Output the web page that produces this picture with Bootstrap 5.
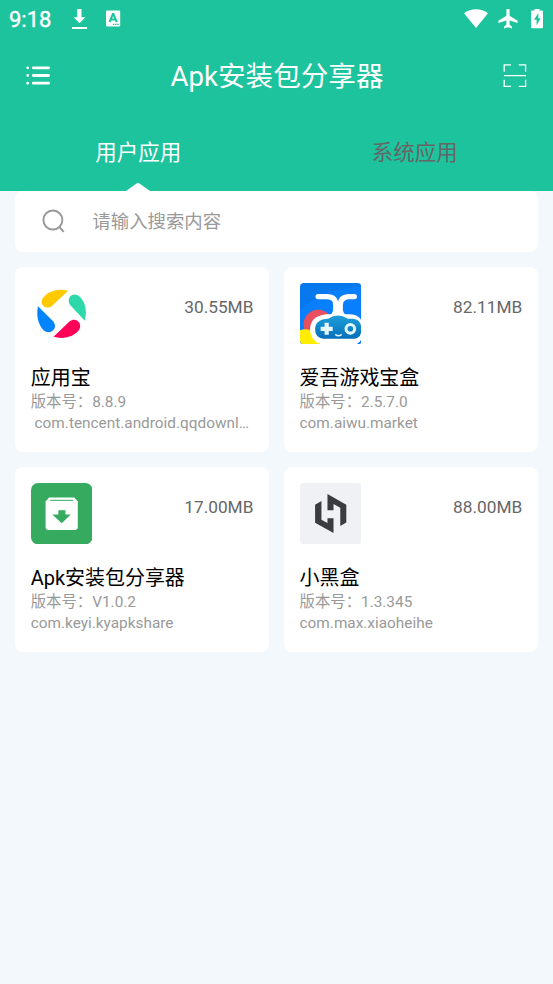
<!DOCTYPE html>
<html lang="zh-CN">
<head>
<meta charset="utf-8">
<meta name="viewport" content="width=device-width, initial-scale=1">
<title>Apk安装包分享器</title>
<link href="https://cdn.jsdelivr.net/npm/bootstrap@5.3.0/dist/css/bootstrap.min.css" rel="stylesheet">
<style>
body{background:#f2f8fb;font-family:Roboto,"Noto Sans CJK SC",sans-serif;min-height:984px;overflow-x:hidden}
svg{display:block;flex:none}
.app-head{background:#1cc39d;height:190.6px}
.status{height:38px;padding:0 10px 0 9px}
.clock{font-size:22px;font-weight:400;-webkit-text-stroke:.4px #fff;line-height:38px;padding-top:2px;width:62px}
.plane{margin-left:10px}
.battery{margin-left:13px}
.toolbar{height:76px;padding:0 26px}
.toolbar h1{font-size:27.6px;font-weight:400;line-height:76px;padding-top:2px}
.tab{height:76.6px;font-size:21.5px;line-height:78px;color:#666}
.tab.on{color:#fff}
.notch{bottom:0;left:50%;transform:translateX(-50%)}
.page{padding:0 15.36px}
.search{height:61.4px;border-radius:8px;padding-left:27px}
.search span{font-size:18.4px;color:#999;margin-left:27px;padding-top:1px}
.apps{display:grid;grid-template-columns:repeat(2,minmax(0,1fr));gap:15.36px;margin-top:15.36px}
.app{height:184.6px;border-radius:8px;padding:15.4px}
.app svg{width:61.4px;height:61.4px}
.size{font-size:17.25px;line-height:20px;color:#666;margin-top:14px}
.name{font-size:19.97px;line-height:27px;color:#000;margin-top:20.7px}
.info{font-size:15.36px;line-height:21.2px;color:#999}
</style>
</head>
<body>
<header class="app-head text-white">
  <div class="status d-flex align-items-center">
    <span class="clock">9:18</span>
    <svg width="17" height="22" viewBox="0 0 17 22" fill="#fff"><path d="M6.200 1h4.300v8.200h3.900l-5.900 6-5.900-6h3.600zM1 19h15v2H1z"/></svg>
    <svg class="ms-3" width="18" height="20" viewBox="0 0 18 20"><rect x="2" y="1.500" width="14.200" height="16" rx="1.200" fill="#fff"/><path d="m5.600 13 3.300-8h.500l3.300 8M6.800 10.600h4.600" fill="none" stroke="#1cc39d" stroke-width="2"/><path d="M9 15.300h1.400m.7 0h1.400m.7 0h1.400" stroke="#1cc39d" stroke-width="1.200"/></svg>
    <svg class="wifi ms-auto" width="24" height="20" viewBox="0 0 24 20" fill="#fff"><path d="M0 4.200C7-1.200 17-1.200 24 4.200L12 19z"/></svg>
    <svg class="plane" width="20" height="20" viewBox="0 0 20 20" fill="#fff"><path d="M8.400 1.100a1.600 1.600 0 0 1 3.200 0v5.700l8 5v2.100l-8-2.500v4.400l2.300 1.700v1.900L10 18.300l-3.900 1.100v-1.900l2.300-1.700v-4.400l-8 2.500v-2.100l8-5z"/></svg>
    <svg class="battery" width="12" height="20" viewBox="0 0 12 20"><path d="M1.200 1.500H3.500V-.300h5v1.800h2.300Q12 1.500 12 2.700v15.300q0 1.300-1.200 1.300H1.200Q0 19.300 0 18V2.700Q0 1.500 1.200 1.500z" fill="#fff"/><path d="M7.300 4 3 10.800h2.600v5.700l4-7.300H7.300z" fill="#1cc39d"/></svg>
  </div>
  <div class="toolbar d-flex align-items-center justify-content-between">
    <svg width="25" height="20" viewBox="0 0 25 20" stroke="#fff" stroke-linecap="round"><path d="M7.300 1.800h15.300M7.300 9.500h15.300M7.300 17.200h15.300" stroke-width="2.800"/><path d="M1.700 1.800h0M1.700 9.500h0M1.700 17.200h0" stroke-width="2.800"/></svg>
    <h1 class="m-0">Apk安装包分享器</h1>
    <svg width="24" height="24" viewBox="0 0 24 24" fill="none" stroke="#fff" stroke-width="1.300"><path d="M1.200 7.700V.900H8M15.800.900h6.800v6.800M1.200 15.700v6.700H8M15.800 22.400h6.800v-6.700M1 11.600h22"/></svg>
  </div>
  <nav class="row g-0 text-center">
    <div class="col tab on position-relative">用户应用
      <svg class="notch position-absolute" width="24" height="8" viewBox="0 0 24 8"><path d="M0 8 10.500.500Q12-.400 13.500.500L24 8z" fill="#fff"/></svg>
    </div>
    <div class="col tab">系统应用</div>
  </nav>
</header>
<main class="page">
  <div class="search bg-white d-flex align-items-center">
    <svg width="23" height="24" viewBox="0 0 23 24" fill="none" stroke="#999" stroke-width="1.900"><circle cx="10.900" cy="11" r="9.500"/><path d="m17.400 18 4.300 4.900"/></svg>
    <span>请输入搜索内容</span>
  </div>
  <section class="apps">
    <article class="app bg-white">
      <div class="d-flex justify-content-between">
        <svg viewBox="0 0 61 61"><g transform="translate(2.400 -.500)"><path d="M34.500 8.300C23 5 12 10 8.700 17c-2.300 5 3.300 10.700 9.400 6.500z" fill="#ffca00"/><path d="M51 38C54.300 27 50 15.500 43.500 12.500c-5-2.300-11.500 3.500-7 9.800z" fill="#2ed8aa"/><path d="M20 54c11 3.300 23-1.500 26-8.300 2.300-5.500-4-11.700-10.200-7z" fill="#ff0358"/><path d="M4.500 23.500C2 35 6.500 46 12.500 49c5.800 2.300 12-4 7.300-10.200z" fill="#0085ff"/></g></svg>
        <span class="size">30.55MB</span>
      </div>
      <div class="name">应用宝</div>
      <div class="info">版本号：8.8.9</div>
      <div class="info text-nowrap">&nbsp;com.tencent.android.qqdownl…</div>
    </article>
    <article class="app bg-white">
      <div class="d-flex justify-content-between">
        <svg viewBox="0 0 61 61">
          <defs><clipPath id="tile"><rect width="61" height="61" rx="4"/></clipPath><linearGradient id="pad" x2="0" y2="1"><stop stop-color="#1e9fda"/><stop offset="1" stop-color="#056fb8"/></linearGradient></defs>
          <g clip-path="url(#tile)"><path fill="#0878ef" d="M0 0h61v61H0z"/><path fill="#087fff" d="M0 28C18 10 40 4 61 4v57H0z"/><circle cx="18" cy="41" r="14.500" fill="#e9505f"/><circle cx="5" cy="60" r="14" fill="#ffed00"/>
          <path d="M26 31H50Q63 32 63 45.500 63 62 50 62H26Q10 60 10 46 10 33 26 31z" fill="#fff"/>
          <path d="M18 13.500h8.500c7 0 9 3.500 9 8.500v4q0 6-6 9M54 13.500h-4.500c-7 0-9.500 3.500-9.500 8.500v4q0 6 6 9" fill="none" stroke="#fff" stroke-width="5.200" stroke-linecap="round"/>
          <path d="M35 24h6v10h-6z" fill="#fff"/>
          <path d="M28 35.500q9.500-6.500 19.500 0h5.500q8 1 8 10.500t-8 9.500H26q-11 0-11-9.500 0-10 13-10.500z" fill="url(#pad)"/>
          <path d="M26.500 39.500v12M20.500 45.500h12" stroke="#e4f7ff" stroke-width="4.200"/><circle cx="50" cy="45.500" r="4.300" fill="none" stroke="#e4f7ff" stroke-width="3"/><path d="M35 51q3.200 2.800 6.400 0" stroke="#e4f7ff" stroke-width="1.500" fill="none"/></g>
        </svg>
        <span class="size">82.11MB</span>
      </div>
      <div class="name">爱吾游戏宝盒</div>
      <div class="info">版本号：2.5.7.0</div>
      <div class="info text-nowrap">com.aiwu.market</div>
    </article>
    <article class="app bg-white">
      <div class="d-flex justify-content-between">
        <svg viewBox="0 0 61 61"><rect width="61" height="61" rx="7" fill="#36ab60"/><path d="M18 14.500h25l3.500 4V43.500q0 3.200-3.200 3.200H17.700q-3.200 0-3.200-3.200V18.500z" fill="#fff"/><path d="M19 17.200h23" stroke="#36ab60" stroke-width="1"/><path d="M27.200 27h7v4.300h5.300L30.500 40l-9.300-8.700h6z" fill="#36ab60"/></svg>
        <span class="size">17.00MB</span>
      </div>
      <div class="name">Apk安装包分享器</div>
      <div class="info">版本号：V1.0.2</div>
      <div class="info text-nowrap">com.keyi.kyapkshare</div>
    </article>
    <article class="app bg-white">
      <div class="d-flex justify-content-between">
        <svg viewBox="0 0 61 61"><rect width="61" height="61" rx="4" fill="#f0f1f4"/><path d="M15 21.500 21.300 18v18.500l6 3.200V35h6v14.700L15 39.500zM27.300 11 46 21.500v17.700l-6 3.500V24.500l-6.700-3.700V27h-6z" fill="#393d40"/></svg>
        <span class="size">88.00MB</span>
      </div>
      <div class="name">小黑盒</div>
      <div class="info">版本号：1.3.345</div>
      <div class="info text-nowrap">com.max.xiaoheihe</div>
    </article>
  </section>
</main>
<script src="https://cdn.jsdelivr.net/npm/bootstrap@5.3.0/dist/js/bootstrap.bundle.min.js"></script>
</body>
</html>
